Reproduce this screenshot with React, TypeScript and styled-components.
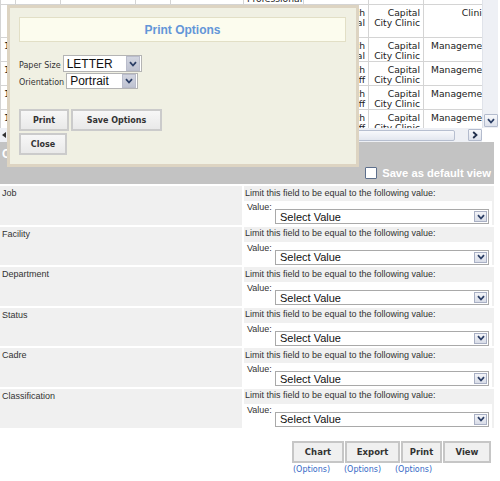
import React from "react";
import styled, { createGlobalStyle } from "styled-components";

const GlobalStyle = createGlobalStyle`
  html, body { margin: 0; padding: 0; background: #fff; }
  body { font-family: "Liberation Sans", Arial, sans-serif; overflow: hidden; }
  * { box-sizing: border-box; }
`;

const Page = styled.div`
  position: relative;
  width: 500px;
  height: 481px;
`;

/* ---------- data grid (behind the dialog) ---------- */
const GridArea = styled.div`
  display: grid;
  grid-template-columns: 482px 16px;
  grid-template-rows: 128px 14px;
  width: 498px;
`;

const Viewport = styled.div`
  overflow: hidden;
  height: 128px;
  background: #fff;
`;

const DataTable = styled.table`
  border-collapse: collapse;
  table-layout: fixed;
  width: 498px;
  margin-top: -20px;
  font-family: "DejaVu Sans", Verdana, sans-serif;
  font-size: 9.2px;
  line-height: 10px;
  color: #222;
`;

const Row = styled.tr<{ $h: number }>`
  height: ${(p) => p.$h}px;
`;

type Align = "left" | "right" | "indent";

const Cell = styled.td<{ $align?: Align }>`
  border: 1px solid #d4d4d4;
  padding: 3px 3px 0 ${(p) => (p.$align === "indent" ? 7 : 3)}px;
  vertical-align: top;
  text-align: ${(p) => (p.$align === "right" ? "right" : "left")};
  white-space: nowrap;
  overflow: hidden;
`;

const VTrack = styled.div`
  background: #eef0f5;
  border-left: 1px solid #e0e3ea;
  display: flex;
  flex-direction: column;
  justify-content: flex-end;
  align-items: center;
  padding-bottom: 1px;
`;

const ScrollBtn = styled.div<{ $w: number; $h: number }>`
  width: ${(p) => p.$w}px;
  height: ${(p) => p.$h}px;
  border: 1px solid #b3bbcd;
  border-radius: 1px;
  background: linear-gradient(#f7f8fb, #dde1eb);
  display: flex;
  align-items: center;
  justify-content: center;
`;

const HTrack = styled.div`
  display: flex;
  align-items: center;
  background: #eef0f5;
  padding: 1px 0;
`;

const LeftArrow = styled.div`
  width: 13px;
  height: 100%;
  display: flex;
  align-items: center;
  padding-left: 2px;
`;

const Thumb = styled.div`
  flex: 1;
  height: 11px;
  border: 1px solid #b7bfd0;
  border-radius: 2px;
  background: linear-gradient(#f8f9fc, #e3e7ef);
  margin-right: 13px;
`;

const Corner = styled.div`
  background: #fff;
`;

/* ---------- gray options band ---------- */
const Band = styled.div`
  width: 494px;
  height: 42px;
  background: #c3c3c3;
  display: flex;
  flex-direction: column;
  justify-content: space-between;
  padding: 5px 3px 4px 2px;
  color: #fff;
  font-weight: bold;
`;

const BandTitle = styled.div`
  font-size: 12px;
  line-height: 14px;
`;

const DefaultView = styled.label`
  align-self: flex-end;
  display: flex;
  align-items: center;
  gap: 5px;
  font-size: 11.2px;
  line-height: 14px;
`;

const CheckBox = styled.span`
  width: 12px;
  height: 12px;
  background: #fff;
  border: 1.5px solid #5d6f8c;
  border-radius: 1px;
`;

/* ---------- filter rows ---------- */
const FilterList = styled.div`
  width: 494px;
  margin-top: 2px;
  display: grid;
  grid-auto-rows: 38.6px;
  row-gap: 2px;
`;

const FilterRow = styled.div`
  display: grid;
  grid-template-columns: 242px 250px;
  column-gap: 2px;
  font-size: 9px;
  color: #333;
`;

const FieldName = styled.div`
  background: #f0f0f0;
  padding: 2px 2px 0;
  line-height: 11px;
`;

const Criteria = styled.div`
  background: #f0f0f0;
  display: flex;
  flex-direction: column;
`;

const LimitText = styled.div`
  height: 15px;
  padding: 1.5px 0 0 1px;
  line-height: 11px;
`;

const ValueArea = styled.div`
  flex: 1;
  background: #fff;
  margin-right: 2px;
  display: flex;
  align-items: flex-start;
`;

const ValueLabel = styled.div`
  width: 31px;
  padding: 1px 0 0 3px;
  line-height: 11px;
`;

const FieldSelect = styled.div`
  width: 214px;
  height: 15px;
  margin-top: 8px;
  border: 1px solid #a9a9a9;
  background: #fff;
  display: flex;
  align-items: center;
  justify-content: space-between;
  padding: 0 1px 0 4px;
  font-size: 11px;
  color: #111;
`;

const DropBtn = styled.span<{ $w: number; $h: number; $dark?: boolean }>`
  width: ${(p) => p.$w}px;
  height: ${(p) => p.$h}px;
  display: flex;
  align-items: center;
  justify-content: center;
  border: 1px solid ${(p) => (p.$dark ? "#b9bccb" : "#a9b0c4")};
  background: ${(p) =>
    p.$dark ? "linear-gradient(#d2d5e0, #bfc3d1)" : "linear-gradient(#f3f4f8, #d9dde8)"};
`;

/* ---------- action buttons ---------- */
const ActionBar = styled.div`
  width: 199px;
  margin: 13px 0 0 292px;
  display: flex;
  flex-direction: column;
`;

const ActionButtons = styled.div`
  display: flex;
  gap: 1px;
`;

const ActionButton = styled.button<{ $w: number }>`
  width: ${(p) => p.$w}px;
  height: 22px;
  border: 2px solid #c6c6c6;
  background: #f0f0f0;
  font-family: "DejaVu Sans", Verdana, sans-serif;
  font-weight: bold;
  font-size: 8.5px;
  color: #333;
  padding: 0;
`;

const OptionLinks = styled.div`
  display: flex;
  gap: 14px;
  padding-left: 1px;
  margin-top: 1px;
`;

const OptionLink = styled.a`
  width: 37px;
  font-family: "DejaVu Sans", Verdana, sans-serif;
  font-size: 8px;
  line-height: 11px;
  color: #3569c6;
  text-decoration: none;
  white-space: nowrap;
`;

/* ---------- print options dialog ---------- */
const Dialog = styled.div`
  position: absolute;
  left: 7px;
  top: 5px;
  width: 352px;
  height: 162px;
  border: 3px solid #ddd4c2;
  background: #f0f0e3;
  padding: 9px 10px 0 9px;
`;

const DialogTitle = styled.div`
  height: 25px;
  border: 1px solid #e2dfc6;
  background: #fcfcee;
  display: flex;
  align-items: center;
  justify-content: center;
  font-weight: bold;
  font-size: 12px;
  color: #6396d8;
`;

const Form = styled.div`
  margin-top: 13px;
  display: flex;
  flex-direction: column;
  gap: 1px;
`;

const FormRow = styled.div<{ $h: number }>`
  display: flex;
  align-items: baseline;
  height: ${(p) => p.$h}px;
`;

const FormLabel = styled.span`
  font-family: "DejaVu Sans", Verdana, sans-serif;
  font-size: 8px;
  color: #333;
`;

const DlgSelect = styled.div<{ $w: number }>`
  display: inline-flex;
  align-items: center;
  justify-content: space-between;
  width: ${(p) => p.$w}px;
  height: 100%;
  margin-left: 2px;
  border: 1px solid #b4b4b4;
  background: #fff;
  padding: 0 1px 0 3px;
  font-size: 12px;
  color: #111;
`;

const DlgButtons = styled.div`
  margin-top: 20px;
  width: 150px;
  display: flex;
  flex-wrap: wrap;
  gap: 2px;
`;

const DlgButton = styled.button<{ $w: number }>`
  width: ${(p) => p.$w}px;
  height: 22px;
  border: 2px solid #cbcbcb;
  background: linear-gradient(#f7f7f7, #e9e9e9);
  font-family: "DejaVu Sans", Verdana, sans-serif;
  font-weight: bold;
  font-size: 8px;
  color: #333;
  padding: 0;
`;

const ChevronDown = ({ color = "#2c3f66" }: { color?: string }) => (
  <svg width="8" height="6" viewBox="0 0 8 6">
    <path d="M1 1.2 L4 4.5 L7 1.2" fill="none" stroke={color} strokeWidth="1.8" />
  </svg>
);

const ChevronRight = () => (
  <svg width="6" height="8" viewBox="0 0 6 8">
    <path d="M1.2 1 L4.5 4 L1.2 7" fill="none" stroke="#1f2d4a" strokeWidth="1.8" />
  </svg>
);

const TriangleLeft = () => (
  <svg width="4" height="6" viewBox="0 0 4 6">
    <path d="M4 0 L0 3 L4 6 Z" fill="#333" />
  </svg>
);

type GridCell = [React.ReactNode, Align];
type GridRow = { h: number; cells: GridCell[] };

const twoLine = (a: string, b: string) => (
  <>
    {a}
    <br />
    {b}
  </>
);

const blank: GridCell = ["", "left"];

const staffRow = (num: string, role: string): GridRow => ({
  h: 23,
  cells: [
    [num, "left"], blank, blank, blank, blank, blank,
    [twoLine("Health", role), "right"],
    [twoLine("Capital", "City Clinic"), "right"], ["Management", "indent"],
  ],
});

const gridRows: GridRow[] = [
  {
    h: 23,
    cells: [
      blank, blank, blank, blank, blank,
      [twoLine("Health", "Professional"), "left"], blank, blank, blank,
    ],
  },
  {
    h: 33,
    cells: [
      blank, blank, blank, blank, blank, blank,
      [twoLine("Health", "Professional"), "right"],
      [twoLine("Capital", "City Clinic"), "right"], ["Clinical", "right"],
    ],
  },
  staffRow("1", "Professional"),
  staffRow("1", "Staff"),
  staffRow("1", "Staff"),
  staffRow("1", "Staff"),
];

const colWidths = [15, 45, 75, 35, 73, 60, 65, 55, 75];

const filters = ["Job", "Facility", "Department", "Status", "Cadre", "Classification"];

const actions: { label: string; w: number; options: boolean }[] = [
  { label: "Chart", w: 52, options: true },
  { label: "Export", w: 55, options: true },
  { label: "Print", w: 41, options: true },
  { label: "View", w: 48, options: false },
];

export default function App() {
  return (
    <>
      <GlobalStyle />
      <Page>
        <GridArea>
          <Viewport>
            <DataTable>
              <colgroup>
                {colWidths.map((w, i) => (
                  <col key={i} style={{ width: w }} />
                ))}
              </colgroup>
              <tbody>
                {gridRows.map((r, i) => (
                  <Row key={i} $h={r.h}>
                    {r.cells.map(([content, align], j) => (
                      <Cell key={j} $align={align}>
                        {content}
                      </Cell>
                    ))}
                  </Row>
                ))}
              </tbody>
            </DataTable>
          </Viewport>
          <VTrack>
            <ScrollBtn $w={14} $h={13}>
              <ChevronDown />
            </ScrollBtn>
          </VTrack>
          <HTrack>
            <LeftArrow>
              <TriangleLeft />
            </LeftArrow>
            <Thumb />
            <ScrollBtn $w={14} $h={12}>
              <ChevronRight />
            </ScrollBtn>
          </HTrack>
          <Corner />
        </GridArea>

        <Band>
          <BandTitle>Choose Columns</BandTitle>
          <DefaultView>
            <CheckBox />
            Save as default view
          </DefaultView>
        </Band>

        <FilterList>
          {filters.map((f) => (
            <FilterRow key={f}>
              <FieldName>{f}</FieldName>
              <Criteria>
                <LimitText>Limit this field to be equal to the following value:</LimitText>
                <ValueArea>
                  <ValueLabel>Value:</ValueLabel>
                  <FieldSelect>
                    Select Value
                    <DropBtn $w={13} $h={11}>
                      <ChevronDown />
                    </DropBtn>
                  </FieldSelect>
                </ValueArea>
              </Criteria>
            </FilterRow>
          ))}
        </FilterList>

        <ActionBar>
          <ActionButtons>
            {actions.map((a) => (
              <ActionButton key={a.label} $w={a.w}>
                {a.label}
              </ActionButton>
            ))}
          </ActionButtons>
          <OptionLinks>
            {actions
              .filter((a) => a.options)
              .map((a) => (
                <OptionLink key={a.label} href="#">
                  (Options)
                </OptionLink>
              ))}
          </OptionLinks>
        </ActionBar>

        <Dialog>
          <DialogTitle>Print Options</DialogTitle>
          <Form>
            <FormRow $h={17}>
              <FormLabel>Paper Size</FormLabel>
              <DlgSelect $w={79}>
                LETTER
                <DropBtn $w={14} $h={15} $dark>
                  <ChevronDown />
                </DropBtn>
              </DlgSelect>
            </FormRow>
            <FormRow $h={16}>
              <FormLabel>Orientation</FormLabel>
              <DlgSelect $w={72}>
                Portrait
                <DropBtn $w={14} $h={14} $dark>
                  <ChevronDown />
                </DropBtn>
              </DlgSelect>
            </FormRow>
          </Form>
          <DlgButtons>
            <DlgButton $w={50}>Print</DlgButton>
            <DlgButton $w={91}>Save Options</DlgButton>
            <DlgButton $w={48}>Close</DlgButton>
          </DlgButtons>
        </Dialog>
      </Page>
    </>
  );
}
